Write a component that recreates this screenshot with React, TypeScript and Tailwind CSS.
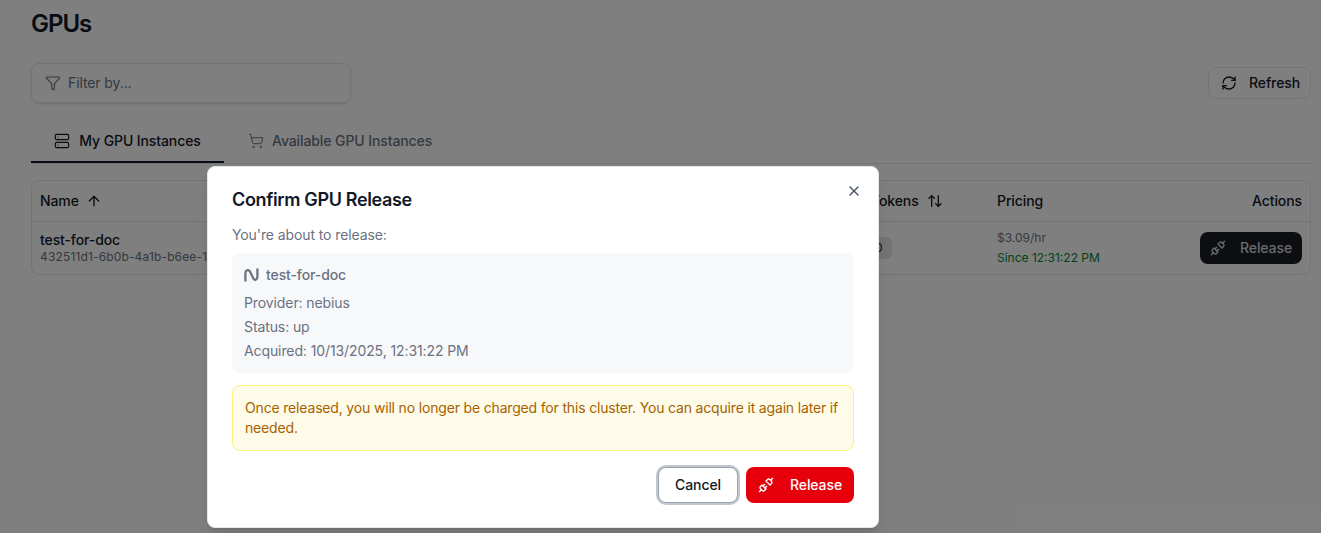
import { ArrowUpDown, ArrowUp, Filter, RefreshCw, Server, ShoppingCart, Unplug, X } from "lucide-react";

function NebiusLogo() {
  return (
    <svg width="15" height="14" viewBox="0 0 15 14" fill="none" className="shrink-0">
      <path d="M1.4 13.5V5.5C1.4 2.2 4.4 0.8 6 3.6L9.4 10.4C10.6 12.8 13.4 11.8 13.4 9V0.5" stroke="#6b7280" strokeWidth="2.3" fill="none" />
    </svg>
  );
}

export default function App() {
  return (
    <div className="relative h-[533px] w-[1321px] overflow-hidden bg-white font-['Inter',sans-serif] text-sm tracking-[-0.1px] text-[#111827] antialiased">
      <div className="flex flex-col pl-[31px] pr-[10px] pt-[8px]">
        <h1 className="h-[32px] text-2xl font-semibold leading-[32px] tracking-[-1px]">GPUs</h1>
        <div className="mt-[23px] flex items-start justify-between">
          <div className="flex h-[40px] w-[320px] items-center gap-[7px] rounded-lg border border-gray-200 pl-[13px] shadow-sm">
            <Filter size={16} className="text-gray-500" strokeWidth={1.75} />
            <span className="text-gray-500">Filter by...</span>
          </div>
          <div className="mt-[4px] flex h-[32px] w-[103px] items-center rounded-lg border border-gray-200 pl-[12px] font-[450]">
            <RefreshCw size={16} strokeWidth={2} />
            <span className="ml-[12px]">Refresh</span>
          </div>
        </div>
        <div className="mt-[17px] flex h-[44px] border-b border-gray-200">
          <div className="flex h-[43px] w-[193px] items-center justify-center gap-[9px] border-b-2 border-gray-900 font-[450]">
            <Server size={16} strokeWidth={1.75} />
            <span>My GPU Instances</span>
          </div>
          <div className="flex h-[41px] items-center gap-[8px] pl-[24px] font-[450] text-gray-500">
            <ShoppingCart size={16} strokeWidth={1.5} />
            <span>Available GPU Instances</span>
          </div>
        </div>
        <div className="mt-[16px] h-[95px] rounded-lg border border-gray-200">
          <div className="flex h-[41px] items-center border-b border-gray-200 pl-[8px] pr-[8px]">
            <div className="flex w-[200px] items-center gap-[7px] font-[450]">
              <span>Name</span>
              <ArrowUp size={16} />
            </div>
            <div className="ml-[631px] flex w-[126px] items-center gap-[8px] font-[450]">
              <span>Tokens</span>
              <ArrowUpDown size={16} />
            </div>
            <div className="font-[450]">Pricing</div>
            <div className="ml-auto font-[450]">Actions</div>
          </div>
          <div className="flex h-[52px] items-center pl-[8px] pr-[8px]">
            <div className="w-[300px]">
              <div className="font-[450] leading-[18px]">test-for-doc</div>
              <div className="whitespace-nowrap text-xs leading-[16px] tracking-[0.15px] text-gray-500">432511d1-6b0b-4a1b-b6ee-1234567890ab</div>
            </div>
            <div className="ml-[520px] h-[22px] w-[32px] rounded-md bg-gray-200 pl-[15px] text-xs leading-[22px]">0</div>
            <div className="ml-[105px] text-xs tracking-normal">
              <div className="leading-[20px] text-gray-500">$3.09/hr</div>
              <div className="leading-[20px] text-green-700">Since 12:31:22 PM</div>
            </div>
            <div className="ml-auto flex h-[32px] w-[102px] items-center rounded-lg bg-[#1a1d23] pl-[10px] font-[450] text-gray-300">
              <Unplug size={16} />
              <span className="ml-[14px]">Release</span>
            </div>
          </div>
        </div>
      </div>

      <div className="absolute inset-0 bg-black/50" />

      <div className="absolute left-[207px] top-[166px] flex h-[362px] w-[672px] flex-col rounded-lg border border-gray-200 bg-white px-[24px] pt-[24px] shadow-lg">
        <X size={16} className="absolute right-[16px] top-[16px] text-gray-600" />
        <h2 className="text-lg font-semibold leading-[18px] tracking-[-0.35px]">Confirm GPU Release</h2>
        <p className="mt-[16px] leading-[20px] text-gray-500">You're about to release:</p>
        <div className="mt-[8px] flex h-[120px] flex-col rounded-lg bg-[#f7f8fa] px-[12px] pt-[12px] text-gray-500">
          <div className="flex items-center gap-[7px] font-[450] leading-[20px]">
            <NebiusLogo />
            <span>test-for-doc</span>
          </div>
          <div className="mt-[8px] leading-[20px]">Provider: nebius</div>
          <div className="mt-[4px] leading-[20px]">Status: up</div>
          <div className="mt-[4px] leading-[20px]">Acquired: 10/13/2025, 12:31:22 PM</div>
        </div>
        <div className="mt-[12px] rounded-lg border border-yellow-200 bg-yellow-50 px-[12px] py-[12px] leading-[20px] tracking-[-0.17px] text-yellow-700">
          Once released, you will no longer be charged for this cluster. You can acquire it again later if needed.
        </div>
        <div className="mt-[16px] flex justify-end gap-[8px]">
          <div className="flex h-[36px] w-[80px] items-center justify-center rounded-lg border border-gray-400 bg-white font-[450] ring-2 ring-gray-400/60">
            Cancel
          </div>
          <div className="flex h-[36px] w-[108px] items-center rounded-lg bg-[#e7000b] pl-[12px] font-[450] text-white">
            <Unplug size={16} />
            <span className="ml-[16px]">Release</span>
          </div>
        </div>
      </div>
    </div>
  );
}
